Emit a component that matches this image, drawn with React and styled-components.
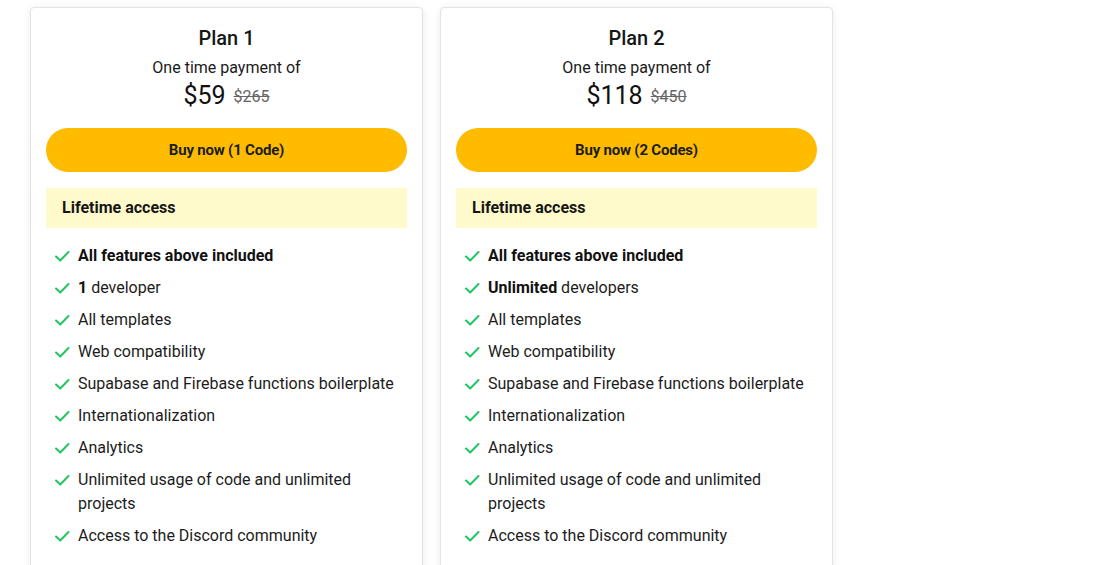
import React from 'react'
import styled, { createGlobalStyle } from 'styled-components'

const GlobalStyle = createGlobalStyle`
  html, body {
    margin: 0;
    background: #ffffff;
    font-family: Roboto, "Liberation Sans", Arial, sans-serif;
    color: #111111;
  }
`

const Page = styled.div`
  display: flex;
  align-items: flex-start;
  gap: 17px;
  padding: 7px 0 0 30px;
`

const Card = styled.div`
  width: 361px;
  padding: 15px 15px 24px;
  background: #ffffff;
  border: 1px solid #e3e3e3;
  border-radius: 4px;
  box-shadow: 0 2px 10px rgba(0, 0, 0, 0.08);
`

const Title = styled.h2`
  margin: 0;
  font-size: 20px;
  line-height: 30px;
  font-weight: 500;
  text-align: center;
  color: #161616;
`

const Subtitle = styled.p`
  margin: 3px 0 0;
  font-size: 16px;
  line-height: 24px;
  text-align: center;
  color: #1a1a1a;
`

const PriceRow = styled.div`
  display: flex;
  justify-content: center;
  align-items: center;
  gap: 8px;
  height: 32px;
`

const Price = styled.span`
  font-size: 25px;
  line-height: 32px;
  font-weight: 400;
  color: #111;
`

const OldPrice = styled.span`
  font-size: 16px;
  line-height: 20px;
  margin-top: 2px;
  color: #666;
  text-decoration: line-through;
`

const BuyButton = styled.button`
  display: block;
  width: 100%;
  height: 44px;
  margin-top: 16px;
  border: none;
  border-radius: 22px;
  background: #ffbb00;
  color: #1c1c1c;
  font-family: Roboto, "Liberation Sans", Arial, sans-serif;
  font-size: 15px;
  font-weight: 700;
  letter-spacing: -0.2px;
  cursor: pointer;
`

const Banner = styled.div`
  margin-top: 16px;
  height: 40px;
  display: flex;
  align-items: center;
  padding: 0 16px;
  background: #fffacb;
  border-radius: 2px;
  font-size: 16px;
  line-height: 22px;
  font-weight: 700;
  color: #161616;
`

const Features = styled.ul`
  list-style: none;
  margin: 16px 0 0;
  padding: 0 0 0 8px;
  display: flex;
  flex-direction: column;
  gap: 8px;
`

const Feature = styled.li`
  display: flex;
  align-items: flex-start;
  gap: 8px;
  font-size: 16px;
  line-height: 24px;
  color: #1c1c1c;

  & b {
    font-weight: 700;
    color: #111;
  }
`

const CheckIcon = styled.svg`
  flex: none;
  width: 16px;
  height: 24px;
`

const Check = () => (
  <CheckIcon viewBox="0 0 16 24" fill="none">
    <path d="M2 12.5 L6.2 16.5 L14.5 8" stroke="#22c55e" strokeWidth="2" strokeLinecap="round" strokeLinejoin="round" />
  </CheckIcon>
)

const plans = [
  { name: 'Plan 1', price: '$59', old: '$265', button: 'Buy now (1 Code)', devs: [<b key="b">1</b>, ' developer'] },
  { name: 'Plan 2', price: '$118', old: '$450', button: 'Buy now (2 Codes)', devs: [<b key="b">Unlimited</b>, ' developers'] },
]

const common = [
  'All templates',
  'Web compatibility',
  'Supabase and Firebase functions boilerplate',
  'Internationalization',
  'Analytics',
  'Unlimited usage of code and unlimited projects',
  'Access to the Discord community',
]

function PlanCard({ plan }) {
  return (
    <Card>
      <Title>{plan.name}</Title>
      <Subtitle>One time payment of</Subtitle>
      <PriceRow>
        <Price>{plan.price}</Price>
        <OldPrice>{plan.old}</OldPrice>
      </PriceRow>
      <BuyButton>{plan.button}</BuyButton>
      <Banner>Lifetime access</Banner>
      <Features>
        <Feature><Check /><span><b>All features above included</b></span></Feature>
        <Feature><Check /><span>{plan.devs}</span></Feature>
        {common.map((f) => (
          <Feature key={f}><Check /><span>{f}</span></Feature>
        ))}
      </Features>
    </Card>
  )
}

export default function App() {
  return (
    <>
      <GlobalStyle />
      <Page>
        {plans.map((p) => <PlanCard key={p.name} plan={p} />)}
      </Page>
    </>
  )
}
